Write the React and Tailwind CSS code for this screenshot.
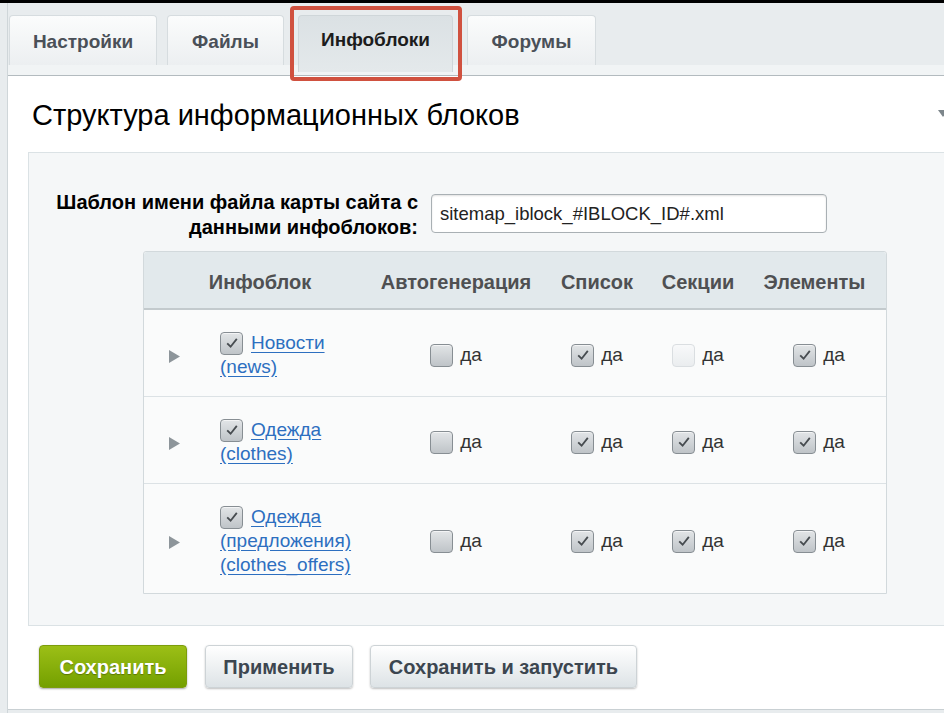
import React from "react";

// Bitrix-style settings page: tabs, sitemap iblock structure table, action buttons

const rows = [
  { name: ["Новости", "(news)"], auto: false, list: true, sec: null, elem: true },
  { name: ["Одежда", "(clothes)"], auto: false, list: true, sec: true, elem: true },
  { name: ["Одежда", "(предложения)", "(clothes_offers)"], auto: false, list: true, sec: true, elem: true },
];

function Box({ checked, disabled }) {
  return (
    <span
      className={
        disabled
          ? "inline-flex shrink-0 items-center justify-center w-[23px] h-[23px] rounded-[4px] border border-[#dadee1] bg-linear-to-b from-[#f8f9fa] to-[#eaedef]"
          : "inline-flex shrink-0 items-center justify-center w-[23px] h-[23px] rounded-[4px] border border-[#878e93] bg-linear-to-b from-[#e2e5e7] to-[#bfc4c8] shadow-[inset_0_1px_0_#f3f4f5]"
      }
    >
      {checked && (
        <svg width="16" height="16" viewBox="0 0 15 15">
          <path d="M3 7.8 L6.2 11 L12 3.6" fill="none" stroke="#474c50" strokeWidth="1.7" />
        </svg>
      )}
    </span>
  );
}

function Yes({ checked, disabled }) {
  return (
    <div className="flex items-center gap-[7px]">
      <Box checked={checked} disabled={disabled} />
      <span className="text-[#333] leading-[24px]">да</span>
    </div>
  );
}

function Tab({ label, active, w, ml }) {
  if (active) {
    return (
      <div
        className={`${w} ${ml} h-[57px] relative z-10 rounded-t-[4px] border border-b-0 border-[#cfd6d9] bg-linear-to-b from-[#dbe1e4] to-[#e4e9eb] flex items-start justify-center pt-[10px] text-[19px] font-bold text-[#1c1c1c]`}
      >
        {label}
      </div>
    );
  }
  return (
    <div
      className={`${w} ${ml} h-[50px] rounded-t-[4px] border border-b-0 border-[#d6dcdf] bg-linear-to-b from-[#fbfcfc] to-[#eceff1] flex items-center justify-center pt-[3px] text-[19px] font-bold text-[#4a5058]`}
    >
      {label}
    </div>
  );
}

export default function App() {
  return (
    <div className="w-[944px] h-[713px] overflow-hidden relative bg-[#e8ecee] border-t-[3px] border-black font-['Liberation_Sans',Arial,sans-serif] text-[19px]">
      <div className="ml-[7px] border-l border-[#cfd6d9] h-full flex flex-col">
        {/* tabs */}
        <div className="flex items-start pt-[12px] h-[62px] pl-[1px]">
          <Tab label="Настройки" w="w-[148px]" ml="ml-0" />
          <Tab label="Файлы" w="w-[117px]" ml="ml-[10px]" />
          <Tab label="Инфоблоки" w="w-[155px]" ml="ml-[14px]" active />
          <Tab label="Форумы" w="w-[129px]" ml="ml-[14px]" />
        </div>
        <div className="h-[11px] bg-[#f1f4f5] border-b border-[#b3bbbf]" />

        {/* main white panel */}
        <div className="bg-white h-[634px] border-b border-[#c9d0d3] flex flex-col">
          <div className="h-[76px] flex items-center justify-between pt-[4px] pl-[24px]">
            <h1 className="text-[29px] text-black font-normal">Структура информационных блоков</h1>
            <svg width="10" height="7" viewBox="0 0 10 7" className="mr-[-4px] mb-[6px]">
              <path d="M0 0 H10 L5 7 Z" fill="#7d868b" />
            </svg>
          </div>

          <div className="ml-[20px] h-[474px] bg-[#f5f7f8] border-t border-b border-l border-[#dbe2e5] pt-[37px]">
            <div className="flex items-start">
              <label className="w-[389px] text-right font-bold text-[20px] text-black leading-[25px]">
                Шаблон имени файла карты сайта с<br />данными инфоблоков:
              </label>
              <div className="ml-[13px] mt-[4px] w-[396px] h-[39px] rounded-[4px] border border-[#a9b0b4] bg-white shadow-[inset_0_1px_2px_rgba(0,0,0,0.12)] flex items-center pl-[8px] text-[18.5px] text-[#222]">
                sitemap_iblock_#IBLOCK_ID#.xml
              </div>
            </div>

            {/* table */}
            <div className="ml-[114px] mt-[11px] w-[744px] border border-[#d2d9dc] rounded-t-[3px] bg-[#fafbfb]">
              <div className="grid grid-cols-[62px_170px_160px_122px_80px_148px] h-[58px] items-center pt-[4px] bg-[#e2e9ec] border-b-2 border-[#c3cacd] font-bold text-[20px] text-[#4f5052] rounded-t-[3px]">
                <div className="col-span-2 text-center">Инфоблок</div>
                <div className="text-center">Автогенерация</div>
                <div className="text-center">Список</div>
                <div className="text-center">Секции</div>
                <div className="text-center pl-[5px]">Элементы</div>
              </div>
              {rows.map((r, i) => (
                <div
                  key={i}
                  className={
                    i < rows.length - 1
                      ? "grid grid-cols-[62px_170px_160px_122px_80px_148px] items-center pt-[21px] pb-[17px] border-b border-[#dce2e5]"
                      : "grid grid-cols-[62px_170px_160px_122px_80px_148px] items-center pt-[21px] pb-[16px]"
                  }
                >
                  <div className="pl-[25px] pt-[2px]">
                    <svg width="11" height="13" viewBox="0 0 11 13" className="block">
                      <path d="M0 0 L11 6.5 L0 13 Z" fill="#8d959a" />
                    </svg>
                  </div>
                  <div className="pl-[14px] leading-[24px]">
                    <div className="flex items-center gap-[8px] h-[24px]">
                      <Box checked />
                      <a href="#" className="text-[#2d6fc0] underline underline-offset-[3px]">
                        {r.name[0]}
                      </a>
                    </div>
                    {r.name.slice(1).map((n, j) => (
                      <div key={j} className="h-[24px]">
                        <a href="#" className="text-[#2d6fc0] underline underline-offset-[3px]">
                          {n}
                        </a>
                      </div>
                    ))}
                  </div>
                  <div className="flex justify-center">
                    <Yes checked={r.auto} />
                  </div>
                  <div className="flex justify-center">
                    <Yes checked={r.list} />
                  </div>
                  <div className="flex justify-center">
                    <Yes checked={r.sec === true} disabled={r.sec === null} />
                  </div>
                  <div className="flex justify-center pl-[14px]">
                    <Yes checked={r.elem} />
                  </div>
                </div>
              ))}
            </div>
          </div>

          {/* buttons */}
          <div className="flex items-start pt-[19px] pl-[31px] text-[20px]">
            <button className="w-[148px] h-[43px] rounded-[4px] border border-[#7c9d0c] bg-linear-to-b from-[#9cbf16] to-[#74a000] shadow-[0_1px_2px_rgba(0,0,0,0.35)] text-white font-bold [text-shadow:0_1px_1px_rgba(0,0,0,0.3)]">
              Сохранить
            </button>
            <button className="ml-[18px] w-[148px] h-[43px] rounded-[4px] border border-[#cdd3d6] bg-linear-to-b from-white to-[#dde3e6] shadow-[0_1px_2px_rgba(0,0,0,0.25)] text-[#3c4650] font-bold">
              Применить
            </button>
            <button className="ml-[17px] w-[267px] h-[43px] rounded-[4px] border border-[#cdd3d6] bg-linear-to-b from-white to-[#dde3e6] shadow-[0_1px_2px_rgba(0,0,0,0.25)] text-[#3c4650] font-bold">
              Сохранить и запустить
            </button>
          </div>
        </div>
      </div>

      {/* highlight frame around the active tab */}
      <div className="absolute left-[290px] top-[3px] w-[172px] h-[75px] border-[4px] border-[#d0513f] rounded-[4px] pointer-events-none" />
    </div>
  );
}
